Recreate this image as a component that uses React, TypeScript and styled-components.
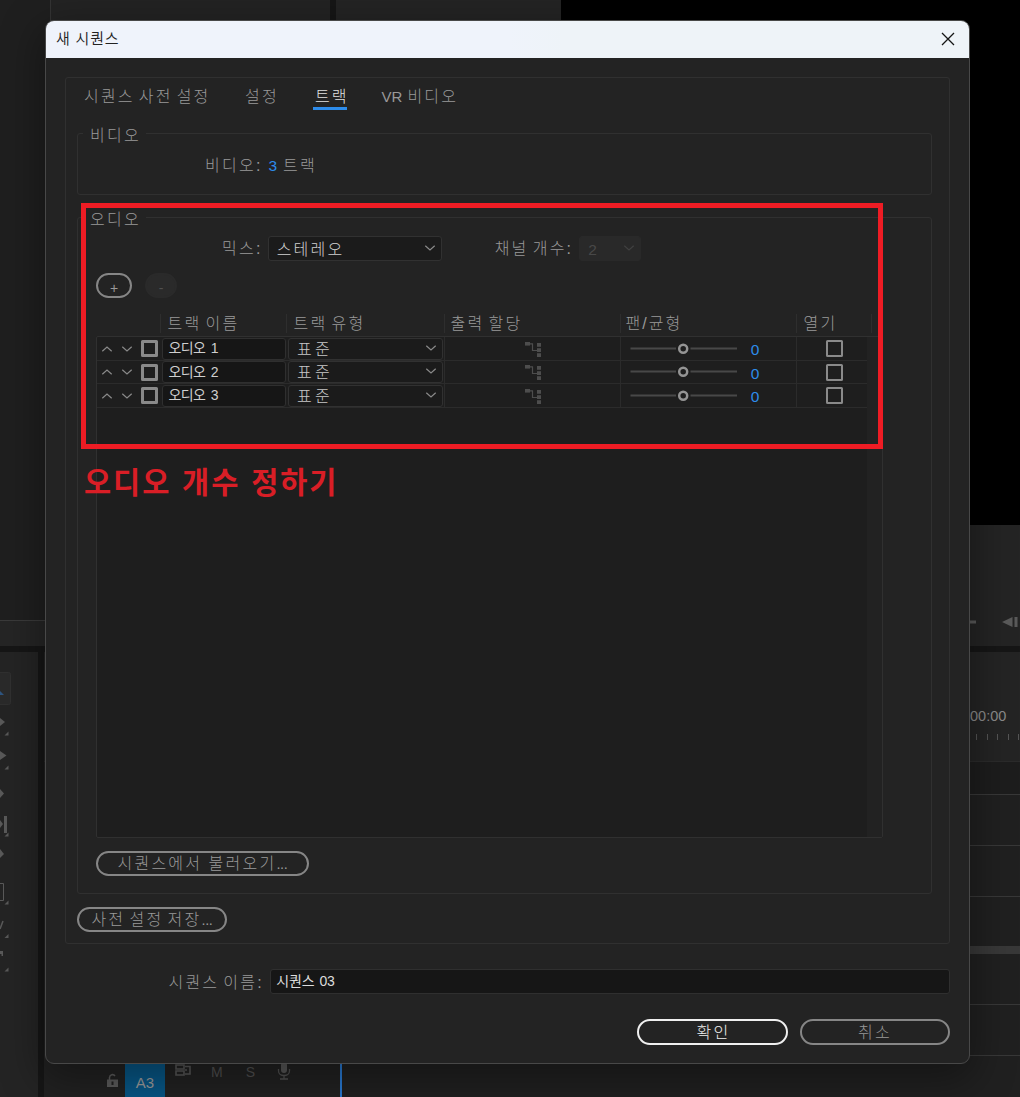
import React from "react";
import styled, { createGlobalStyle } from "styled-components";

const GlobalStyle = createGlobalStyle`
  html, body { margin: 0; padding: 0; background: #1e1e1e; }
  * { box-sizing: border-box; }
  body { font-family: "Liberation Sans", "Noto Sans CJK KR", sans-serif; }
`;

const Screen = styled.div`
  position: relative;
  width: 1020px;
  height: 1097px;
  overflow: hidden;
  background: #161616;
`;

/* ---------- workspace behind the dialog ---------- */
const Workspace = styled.div`
  display: flex;
  flex-direction: column;
  gap: 6px;
  height: 100%;
`;
const UpperRow = styled.div`
  display: flex;
  height: 646px;
`;
const SourcePanel = styled.div`
  display: flex;
  flex-direction: column;
  width: 330px;
  margin-right: 6px;
  background: #232323;
`;
const SourceBody = styled.div`
  height: 620px;
  width: 51px;
  background: #1f1f1f;
  border-right: 1px solid #343434;
`;
const SourceFooter = styled.div`
  flex: 1;
  background: #252525;
  border-top: 1px solid #3a3a3a;
`;
const EffectPanel = styled.div`
  width: 225px;
  background: #242424;
`;
const MonitorPanel = styled.div`
  flex: 1;
  display: flex;
  flex-direction: column;
  background: #242424;
`;
const Monitor = styled.div`
  height: 525px;
  background: #000;
`;
const Transport = styled.div`
  flex: 1;
  display: flex;
  justify-content: flex-end;
  padding-top: 89px;
`;
const LowerRow = styled.div`
  display: flex;
  gap: 6px;
  flex: 1;
`;
const ToolPanel = styled.div`
  width: 38px;
  background: #242424;
`;
const Timeline = styled.div`
  flex: 1;
  display: flex;
  flex-direction: column;
`;
const Ruler = styled.div`
  height: 110px;
  padding: 56px 0 0 926px;
  background: #242424;
  border-bottom: 1px solid #2b2b2b;
  color: #8b8b8b;
  font-size: 14.5px;
  line-height: 16px;
  white-space: nowrap;
`;
const Ticks = styled.div`
  display: flex;
  margin-top: 10px;
  padding-left: 6px;
  gap: 9.5px;
`;
const Tick = styled.i`
  width: 1px;
  height: 6px;
  background: #555;
`;
const Tracks = styled.div`
  flex: 1;
  display: flex;
`;
const TrackHeads = styled.div`
  width: 296px;
  display: flex;
  align-items: flex-end;
  background: #212121;
`;
const TrackHead = styled.div`
  display: flex;
  height: 51px;
  width: 100%;
  padding-left: 62px;
`;
const TrackBadge = styled.div`
  width: 40px;
  margin-left: 7px;
  padding-top: 27px;
  background: #075685;
  color: #9a9a9a;
  font-size: 15px;
  line-height: 20px;
  text-align: center;
`;
const HeadSlot = styled.div<{ $top: number; $left: number }>`
  margin-left: ${(p) => p.$left}px;
  padding-top: ${(p) => p.$top}px;
  color: #505050;
  font-size: 14px;
  line-height: 14px;
`;
const Lanes = styled.div`
  flex: 1;
  border-left: 2px solid #2878d0;
  background: #202020;
`;
const Lane = styled.div<{ $h: number; $bg?: string }>`
  height: ${(p) => p.$h}px;
  background: ${(p) => p.$bg ?? "transparent"};
  border-bottom: 1px solid #383838;
`;

/* ---------- dialog ---------- */
const Dialog = styled.div`
  position: absolute;
  left: 45px;
  top: 20px;
  width: 925px;
  height: 1044px;
  border: 1px solid #484848;
  border-radius: 9px;
  background: #232323;
  overflow: hidden;
`;
const DialogShade = styled.div`
  position: absolute;
  left: 45px;
  top: 20px;
  width: 925px;
  height: 1044px;
  border-radius: 9px;
  box-shadow: 0 12px 40px 4px rgba(0, 0, 0, 0.36);
`;
const TitleBar = styled.div`
  display: flex;
  align-items: center;
  justify-content: space-between;
  height: 37px;
  padding: 0 14px 2px 10px;
  background: linear-gradient(90deg, #eff3fb 50%, #eef3f8 56%);
`;
const DialogBody = styled.div`
  padding: 19px 19px 0;
`;
const Txt = styled.span<{
  $c?: string;
  $s?: number;
  $ls?: number;
  $ws?: number;
  $w?: number;
  $pt?: number;
  $pl?: number;
}>`
  display: block;
  white-space: pre;
  color: ${(p) => p.$c ?? "#999"};
  font-size: ${(p) => p.$s ?? 16}px;
  font-weight: ${(p) => p.$w ?? 300};
  letter-spacing: ${(p) => p.$ls ?? 2.25}px;
  word-spacing: ${(p) => p.$ws ?? -2.6}px;
  line-height: 20px;
  padding-top: ${(p) => p.$pt ?? 0}px;
  padding-left: ${(p) => p.$pl ?? 0}px;
`;
const Tight = styled.span`
  letter-spacing: 0;
  font-size: 15px;
`;
const Dots = styled.span`
  letter-spacing: -0.3px;
  font-size: 14.5px;
`;
const Card = styled.div`
  height: 867px;
  border: 1px solid #303030;
  border-radius: 3px;
  padding: 0 17px 0 11px;
`;
const Tabs = styled.div`
  display: flex;
  gap: 34.5px;
  height: 47px;
  padding: 9px 0 0 7px;
`;
const Tab = styled.div<{ $active?: boolean }>`
  width: ${(p) => (p.$active ? "33.5px" : "auto")};
  padding-left: ${(p) => (p.$active ? 1.5 : 0)}px;
  height: 23px;
  border-bottom: 3px solid ${(p) => (p.$active ? "#2d8ceb" : "transparent")};
`;
const Group = styled.fieldset<{ $h: number; $mt: number }>`
  height: ${(p) => p.$h}px;
  margin: ${(p) => p.$mt}px 0 0;
  padding: 0 0 0 18px;
  border: 1px solid #303030;
  border-radius: 3px;
  min-width: 0;
`;
const Legend = styled.legend`
  height: 16px;
  margin-left: -13px;
  padding: 1px 5px 0 7px;
`;
const Row = styled.div<{ $mt?: number; $ml?: number; $h?: number }>`
  display: flex;
  align-items: center;
  height: ${(p) => p.$h ?? 25}px;
  margin-top: ${(p) => p.$mt ?? 0}px;
  margin-left: ${(p) => p.$ml ?? 0}px;
`;
const Select = styled.div<{ $w?: number; $h: number; $disabled?: boolean; $pr: number }>`
  display: flex;
  align-items: center;
  justify-content: space-between;
  width: ${(p) => (p.$w ? p.$w + "px" : "auto")};
  height: ${(p) => p.$h}px;
  padding: 0 ${(p) => p.$pr}px 0 8px;
  border: 1px solid ${(p) => (p.$disabled ? "#292929" : "#313131")};
  border-radius: 3px;
  background: ${(p) => (p.$disabled ? "#292929" : "#1b1b1b")};
  svg { margin-bottom: 2px; }
`;
const Gap = styled.div<{ $w: number }>`
  width: ${(p) => p.$w}px;
  flex: none;
`;
const Pill = styled.div<{ $w: number; $c?: string; $h?: number; $off?: boolean }>`
  display: flex;
  align-items: center;
  justify-content: center;
  width: ${(p) => p.$w}px;
  height: ${(p) => p.$h ?? 25}px;
  border: 2px solid ${(p) => (p.$off ? "#2a2a2a" : p.$c ?? "#868686")};
  border-radius: 13px;
  background: ${(p) => (p.$off ? "#2a2a2a" : "transparent")};
`;
const TableHead = styled.div`
  display: grid;
  grid-template-columns: 63px 126px 158px 176px 176px 75px 1fr;
  width: 787px;
  height: 18px;
  margin-top: 16px;
  padding-left: 1px;
`;
const HeadCell = styled.div<{ $bar?: boolean; $pl?: number }>`
  padding-left: ${(p) => p.$pl ?? 5.5}px;
  height: 19px;
  border-left: 1px solid ${(p) => (p.$bar ? "#2e2e2e" : "transparent")};
`;
const TableBody = styled.div`
  display: flex;
  width: 787px;
  height: 502px;
  margin-top: 4px;
  border: 1px solid #303030;
  border-radius: 2px;
  background: #1e1e1e;
`;
const Rows = styled.div`
  width: 770px;
`;
const ScrollTrack = styled.div`
  flex: 1;
  background: #222;
`;
const TrackRow = styled.div`
  display: grid;
  grid-template-columns: 64px 126px 157px 176px 176px 71px;
  height: 23.7px;
  border-bottom: 1px solid #2b2b2b;
`;
const Cell = styled.div<{ $bar?: boolean; $pl?: number; $gap?: number }>`
  display: flex;
  align-items: center;
  gap: ${(p) => p.$gap ?? 0}px;
  padding-left: ${(p) => p.$pl ?? 0}px;
  border-left: 1px solid ${(p) => (p.$bar ? "#2b2b2b" : "transparent")};
  svg { flex: none; }
`;
const Check = styled.div<{ $b: number }>`
  flex: none;
  width: 17px;
  height: 17px;
  border: ${(p) => p.$b}px solid #8a8a8a;
  border-radius: 1.5px;
`;
const Input = styled.div<{ $w: number; $h: number }>`
  display: flex;
  align-items: center;
  width: ${(p) => p.$w}px;
  height: ${(p) => p.$h}px;
  padding: 0 0 1px 5.5px;
  border: 1px solid #2f2f2f;
  border-radius: 3px;
  background: #161616;
`;
const Actions = styled.div`
  display: flex;
  justify-content: flex-end;
  gap: 12px;
  margin-top: 25px;
`;

/* ---------- annotation ---------- */
const Highlight = styled.div`
  position: absolute;
  left: 81px;
  top: 203px;
  width: 802px;
  height: 246px;
  border: 5px solid #ee1c24;
`;
const Note = styled.div`
  position: absolute;
  left: 84px;
  top: 460px;
  color: #d91e26;
  font: 700 29.5px/40px "Noto Sans CJK KR", sans-serif;
  letter-spacing: 1.95px;
  word-spacing: 2.2px;
  white-space: pre;
`;

const Chevron = ({ up, c = "#8a8a8a" }: { up?: boolean; c?: string }) => (
  <svg width="12" height="8" viewBox="0 0 12 8" fill="none" stroke={c} strokeWidth="1.2">
    <path d={up ? "M1.3 6.2 L6 2 L10.7 6.2" : "M1.3 1.8 L6 6 L10.7 1.8"} />
  </svg>
);
const RouteIcon = () => (
  <svg width="17" height="16" viewBox="0 0 17 16" fill="#4d4d4d">
    <rect x="0" y="1" width="5" height="3.6" />
    <path d="M5 2.8H7.5V9.5H12" fill="none" stroke="#4d4d4d" strokeWidth="1.2" />
    <rect x="12" y="2" width="4" height="3.8" />
    <rect x="12" y="7.2" width="4" height="3.8" />
    <rect x="12" y="12.2" width="4" height="3.8" />
  </svg>
);
const PanSlider = () => (
  <svg width="108" height="14" viewBox="0 0 108 14">
    <path d="M0.5 6.5H46M60.5 6.5H107" stroke="#484848" strokeWidth="2" />
    <circle cx="53.2" cy="6.7" r="4" fill="none" stroke="#949494" strokeWidth="2.5" />
  </svg>
);
const ToolStrip = () => (
  <svg width="38" height="340" viewBox="0 652 38 340" fill="#595959">
    <rect x="-4" y="672.5" width="14.5" height="32" rx="2" fill="#2a2a2a" stroke="#303030" />
    <path d="M0 691L4 695H0Z" fill="#2e5580" />
    <path d="M0 718L5 722L0 726Z" />
    <path d="M0 751L6.5 755.5L0 760Z" />
    <path d="M0 789L4 793.5L0 798Z" />
    <path d="M0 820L3 824L0 828ZM4 816H7V833H4Z" />
    <path d="M0 849L4 854L0 858Z" />
    <path d="M-5 883.5H3.5V900.5H-5" fill="none" stroke="#595959" />
    <path d="M3 921L0 929" fill="none" stroke="#595959" strokeWidth="1.5" />
    <path d="M0 951H3V956H1.5V954H0Z" />
    {[735.5, 769.5, 836.5, 904.5, 938, 971.5].map((y) => (
      <path key={y} d={`M8.5 ${y - 4}V${y}H4.5Z`} />
    ))}
  </svg>
);

export default function App() {
  return (
    <Screen>
      <GlobalStyle />
      <Workspace>
        <UpperRow>
          <SourcePanel>
            <SourceBody />
            <SourceFooter />
          </SourcePanel>
          <EffectPanel />
          <MonitorPanel>
            <Monitor />
            <Transport>
              <svg width="56" height="16" viewBox="0 0 56 16" fill="#5a5a5a">
                <path d="M5 6.5H12V9.5H5ZM38 8L48.5 3V13ZM50.5 3H53.5V13H50.5Z" />
              </svg>
            </Transport>
          </MonitorPanel>
        </UpperRow>
        <LowerRow>
          <ToolPanel>
            <ToolStrip />
          </ToolPanel>
          <Timeline>
            <Ruler>
              00:00
              <Ticks>
                <Tick /><Tick /><Tick /><Tick /><Tick />
              </Ticks>
            </Ruler>
            <Tracks>
              <TrackHeads>
                <TrackHead>
                  <HeadSlot $left={0} $top={27}>
                    <svg width="12" height="15" viewBox="0 0 12 15">
                      <path d="M3.5 7V4.5A3 3 0 0 1 9 3" fill="none" stroke="#5a5a5a" strokeWidth="1.5" />
                      <path fillRule="evenodd" d="M1 6.5H12V14H1ZM5.5 8.5V12H7.5V8.5Z" fill="#5a5a5a" />
                    </svg>
                  </HeadSlot>
                  <TrackBadge>A3</TrackBadge>
                  <HeadSlot $left={10} $top={17}>
                    <svg width="17" height="14" viewBox="0 0 17 14" fill="none" stroke="#575757" strokeWidth="1.6">
                      <path d="M1 2H9V6H1ZM1 8H9V12H1ZM10 3.5H15V11H10M10 7H12" />
                    </svg>
                  </HeadSlot>
                  <HeadSlot $left={19} $top={19}>M</HeadSlot>
                  <HeadSlot $left={23} $top={19}>S</HeadSlot>
                  <HeadSlot $left={22} $top={15}>
                    <svg width="14" height="20" viewBox="0 0 14 20">
                      <rect x="4" y="1" width="6" height="11" rx="3" fill="#575757" />
                      <path d="M1.5 8V10C1.5 16 12.5 16 12.5 10V8M7 14V18M3 18H11" fill="none" stroke="#505050" strokeWidth="1.3" />
                    </svg>
                  </HeadSlot>
                </TrackHead>
              </TrackHeads>
              <Lanes>
                <Lane $h={33} $bg="#1d1d1d" />
                <Lane $h={51} />
                <Lane $h={51} />
                <Lane $h={50} />
                <Lane $h={7} $bg="#383838" />
                <Lane $h={51} />
                <Lane $h={51} />
              </Lanes>
            </Tracks>
          </Timeline>
        </LowerRow>
      </Workspace>

      <DialogShade />
      <Dialog>
        <TitleBar>
          <Txt $c="#222" $s={15} $ls={0.8} $ws={0} $w={350}>새 시퀀스</Txt>
          <svg width="14" height="14" viewBox="0 0 14 14" stroke="#151515" strokeWidth="1.3">
            <path d="M1 1L13 13M13 1L1 13" />
          </svg>
        </TitleBar>
        <DialogBody>
          <Card>
            <Tabs>
              <Tab><Txt $ls={2.2}>시퀀스 사전 설정</Txt></Tab>
              <Tab><Txt $ls={2.2}>설정</Txt></Tab>
              <Tab $active><Txt $ls={2.2} $c="#e0e0e0">트랙</Txt></Tab>
              <Tab><Txt $ws={1} $ls={2.2}><Tight>VR </Tight>비디오</Txt></Tab>
            </Tabs>

            <Group $h={70} $mt={0}>
              <Legend><Txt>비디오</Txt></Legend>
              <Row $ml={109} $mt={15} $h={20}>
                <Txt>비디오:</Txt>
                <Gap $w={6} />
                <Txt $c="#2d8ceb" $s={15.5}>3</Txt>
                <Gap $w={3.5} />
                <Txt>트랙</Txt>
              </Row>
            </Group>

            <Group $h={685} $mt={14}>
              <Legend><Txt>오디오</Txt></Legend>
              <Row $ml={126} $mt={11}>
                <Txt $pt={1}>믹스:</Txt>
                <Gap $w={5} />
                <Select $w={174} $h={25} $pr={5}>
                  <Txt $c="#d0d0d0" $pt={2}>스테레오</Txt>
                  <Chevron />
                </Select>
                <Gap $w={53} />
                <Txt $pt={1}>채널 개수:</Txt>
                <Gap $w={6} />
                <Select $w={62} $h={25} $pr={5} $disabled>
                  <Txt $c="#484848" $s={15.5} $pt={2}>2</Txt>
                  <Chevron c="#404040" />
                </Select>
              </Row>
              <Row $mt={12}>
                <Pill $w={36}><Txt $ls={0} $s={14} $pt={4}>+</Txt></Pill>
                <Gap $w={13} />
                <Pill $w={32} $off><Txt $ls={0} $s={14} $pt={5} $c="#505050">-</Txt></Pill>
              </Row>
              <TableHead>
                <HeadCell />
                <HeadCell $bar $pl={6.5}><Txt>트랙 이름</Txt></HeadCell>
                <HeadCell $bar $pl={6.5}><Txt>트랙 유형</Txt></HeadCell>
                <HeadCell $bar><Txt>출력 할당</Txt></HeadCell>
                <HeadCell $bar $pl={4.5}><Txt $ls={2}>팬/균형</Txt></HeadCell>
                <HeadCell $bar $pl={6.5}><Txt>열기</Txt></HeadCell>
                <HeadCell $bar />
              </TableHead>
              <TableBody>
                <Rows>
                  {[1, 2, 3].map((n) => (
                    <TrackRow key={n}>
                      <Cell $pl={2.6} $gap={8}>
                        <Chevron up />
                        <Chevron />
                        <Check $b={3} />
                      </Cell>
                      <Cell>
                        <Input $w={124} $h={22}>
                          <Txt $c="#cfcfcf" $s={14} $ls={-0.6} $ws={2} $w={400}>오디오 {n}</Txt>
                        </Input>
                      </Cell>
                      <Cell>
                        <Select $w={155} $h={22} $pr={5}>
                          <Txt $c="#c8c8c8" $ls={3.3} $pt={2}>표준</Txt>
                          <Chevron />
                        </Select>
                      </Cell>
                      <Cell $bar $pl={80}><RouteIcon /></Cell>
                      <Cell $bar $pl={9.4}>
                        <PanSlider />
                        <Gap $w={12.4} />
                        <Txt $c="#2d8ceb" $s={15.5} $ls={0} $pt={3}>0</Txt>
                      </Cell>
                      <Cell $bar $pl={28.5}><Check $b={2} /></Cell>
                    </TrackRow>
                  ))}
                </Rows>
                <ScrollTrack />
              </TableBody>
              <Row $mt={13}>
                <Pill $w={213}><Txt $ws={-0.5}>시퀀스에서 불러오기<Dots>...</Dots></Txt></Pill>
              </Row>
            </Group>

            <Row $mt={13}>
              <Pill $w={150}><Txt>사전 설정 저장<Dots>...</Dots></Txt></Pill>
            </Row>
          </Card>

          <Row $mt={25} $ml={103.5}>
            <Txt $ls={2.2} $pt={2}>시퀀스 이름:</Txt>
            <Gap $w={6} />
            <Input $w={680} $h={25}>
              <Txt $c="#dcdcdc" $s={14} $ls={-0.2} $ws={1.5} $w={400}>시퀀스 03</Txt>
            </Input>
          </Row>
          <Actions>
            <Pill $w={151} $h={26} $c="#efefef"><Txt $c="#efefef" $pt={2} $pl={2}>확인</Txt></Pill>
            <Pill $w={150} $h={26}><Txt $pt={2}>취소</Txt></Pill>
          </Actions>
        </DialogBody>
      </Dialog>

      <Highlight />
      <Note>오디오 개수 정하기</Note>
    </Screen>
  );
}
